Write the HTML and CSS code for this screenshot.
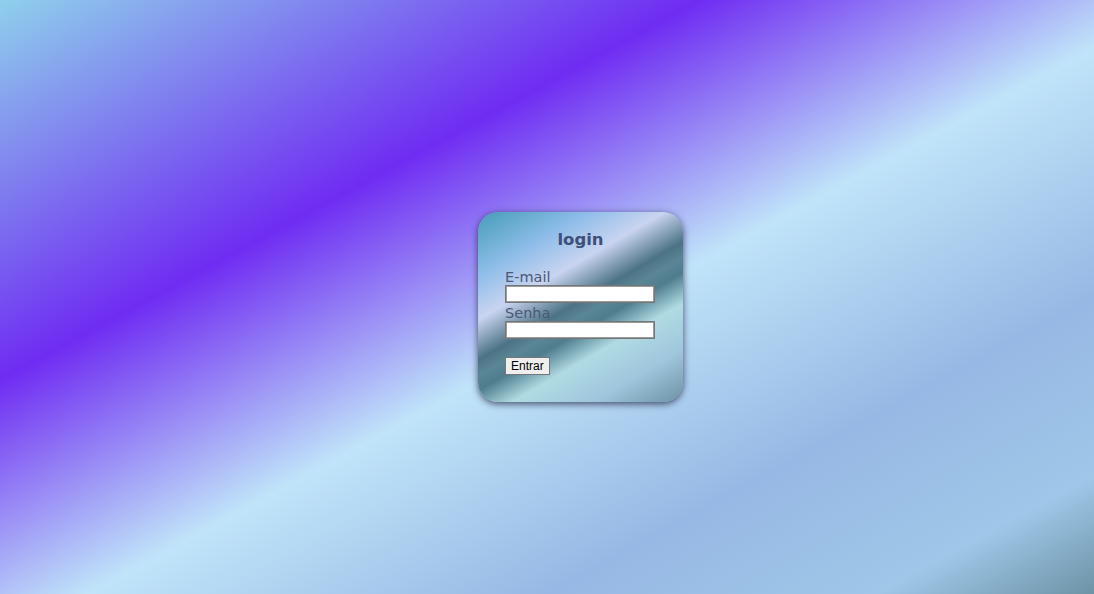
FILE: index.html
```html
<!DOCTYPE html>
<html lang="pt">
<head>
<meta charset="utf-8">
<title>login</title>
<link rel="stylesheet" href="styles.css">
</head>
<body>
<main class="page">
  <form class="card">
    <h1 class="card-title">login</h1>
    <label class="field-label" for="email">E-mail</label>
    <input class="field-input" type="text" id="email">
    <label class="field-label field-label--gap" for="senha">Senha</label>
    <input class="field-input" type="password" id="senha">
    <button class="btn" type="button">Entrar</button>
  </form>
</main>
</body>
</html>
```

FILE: styles.css
```css
html, body {
  margin: 0;
  padding: 0;
  height: 100%;
}

body {
  background: linear-gradient(to bottom right,
    #8fd0ec 0%,
    #6f2cf2 32%,
    #c0e4f9 54%,
    #97b8e4 75%,
    #9fc7e8 90%,
    #6d93a6 100%);
  font-family: "DejaVu Sans", Verdana, sans-serif;
}

.page {
  min-height: 100vh;
  display: flex;
  justify-content: center;
  align-items: center;
}

.card {
  box-sizing: border-box;
  width: 205px;
  height: 190px;
  margin: 20px 0 0 67px;
  padding: 18px 27px 0 27px;
  border-radius: 20px;
  display: flex;
  flex-direction: column;
  align-items: flex-start;
  background: linear-gradient(150deg,
    #469cb7 0%,
    #8bbce8 20%,
    #c9d4f1 35%,
    #4c7385 48%,
    #5a8696 53%,
    #4f7d8e 58%,
    #b0dbe3 68%,
    #9fc6dd 83%,
    #6c92a5 100%);
  box-shadow: 0 2px 7px rgba(30, 30, 60, 0.75);
}

.card-title {
  align-self: stretch;
  margin: 0 0 19px 0;
  font-size: 16.5px;
  line-height: 20px;
  font-weight: bold;
  text-align: center;
  color: #3f4f7a;
}

.field-label {
  font-size: 14.5px;
  line-height: 16px;
  color: #4b5878;
}

.field-label--gap {
  margin-top: 2px;
}

.field-input {
  box-sizing: border-box;
  width: 150px;
  height: 18px;
  margin: 0;
  padding: 0 2px;
  border: 1px solid #767676;
  box-shadow: inset 0 0 0 1px #9a9a9a;
  border-radius: 0;
  background: #fff;
}

.btn {
  box-sizing: border-box;
  height: 18px;
  margin-top: 18px;
  padding: 0 5px;
  border: 1px solid #767676;
  border-radius: 0;
  background: #efefef;
  color: #000;
  font-family: "Liberation Sans", Arial, sans-serif;
  font-size: 12px;
  line-height: 16px;
}
```
